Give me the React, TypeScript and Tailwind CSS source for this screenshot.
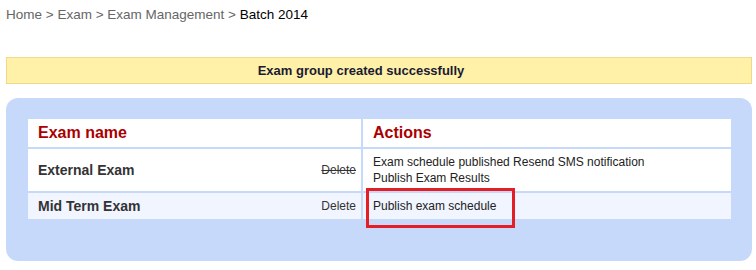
export default function App() {
  return (
    <div className="w-[756px] h-[270px] bg-white font-['Liberation_Sans',Arial,sans-serif] relative">
      <div className="pt-[6px] pl-[6px] text-[13.5px] leading-[18px] text-[#666]">
        Home &gt; Exam &gt; Exam Management &gt; <span className="text-black">Batch 2014</span>
      </div>

      <div className="mt-[33px] mx-[6px] mr-[4px] h-[27px] bg-[#fff1a8] border border-[#f0d98a] flex items-center justify-center pr-[36px]">
        <span className="text-[13px] font-bold text-[#1a1a33]">Exam group created successfully</span>
      </div>

      <div className="mt-[14px] ml-[6px] mr-[4px] h-[163px] bg-[#c6d9fb] rounded-[12px] pt-[21px] pl-[22px] pr-[21px]">
        <div className="grid grid-cols-[333px_1fr] gap-[2px] bg-[#c6d9fb]">
          <div className="bg-white h-[28px] flex items-center pl-[10px] text-[16px] font-bold text-[#aa0000]">Exam name</div>
          <div className="bg-white h-[28px] flex items-center pl-[10px] text-[16px] font-bold text-[#aa0000]">Actions</div>

          <div className="bg-white h-[42px] flex items-center justify-between pl-[10px] pr-[5px]">
            <span className="text-[14px] font-bold text-[#333]">External Exam</span>
            <span className="text-[12px] text-[#333] line-through">Delete</span>
          </div>
          <div className="bg-white h-[42px] flex flex-col justify-center pl-[10px] text-[12px] leading-[16px] text-[#222]">
            <span>Exam schedule published Resend SMS notification</span>
            <span>Publish Exam Results</span>
          </div>

          <div className="bg-[#f0f5ff] h-[26px] flex items-center justify-between pl-[10px] pr-[5px]">
            <span className="text-[14px] font-bold text-[#333]">Mid Term Exam</span>
            <span className="text-[12px] text-[#333]">Delete</span>
          </div>
          <div className="bg-[#f0f5ff] h-[26px] flex items-center pl-[10px] text-[12px] text-[#222]">
            Publish exam schedule
          </div>
        </div>
      </div>

      <div className="absolute left-[366px] top-[188px] w-[149px] h-[40px] border-[3px] border-[#e31e24]" />
    </div>
  );
}
